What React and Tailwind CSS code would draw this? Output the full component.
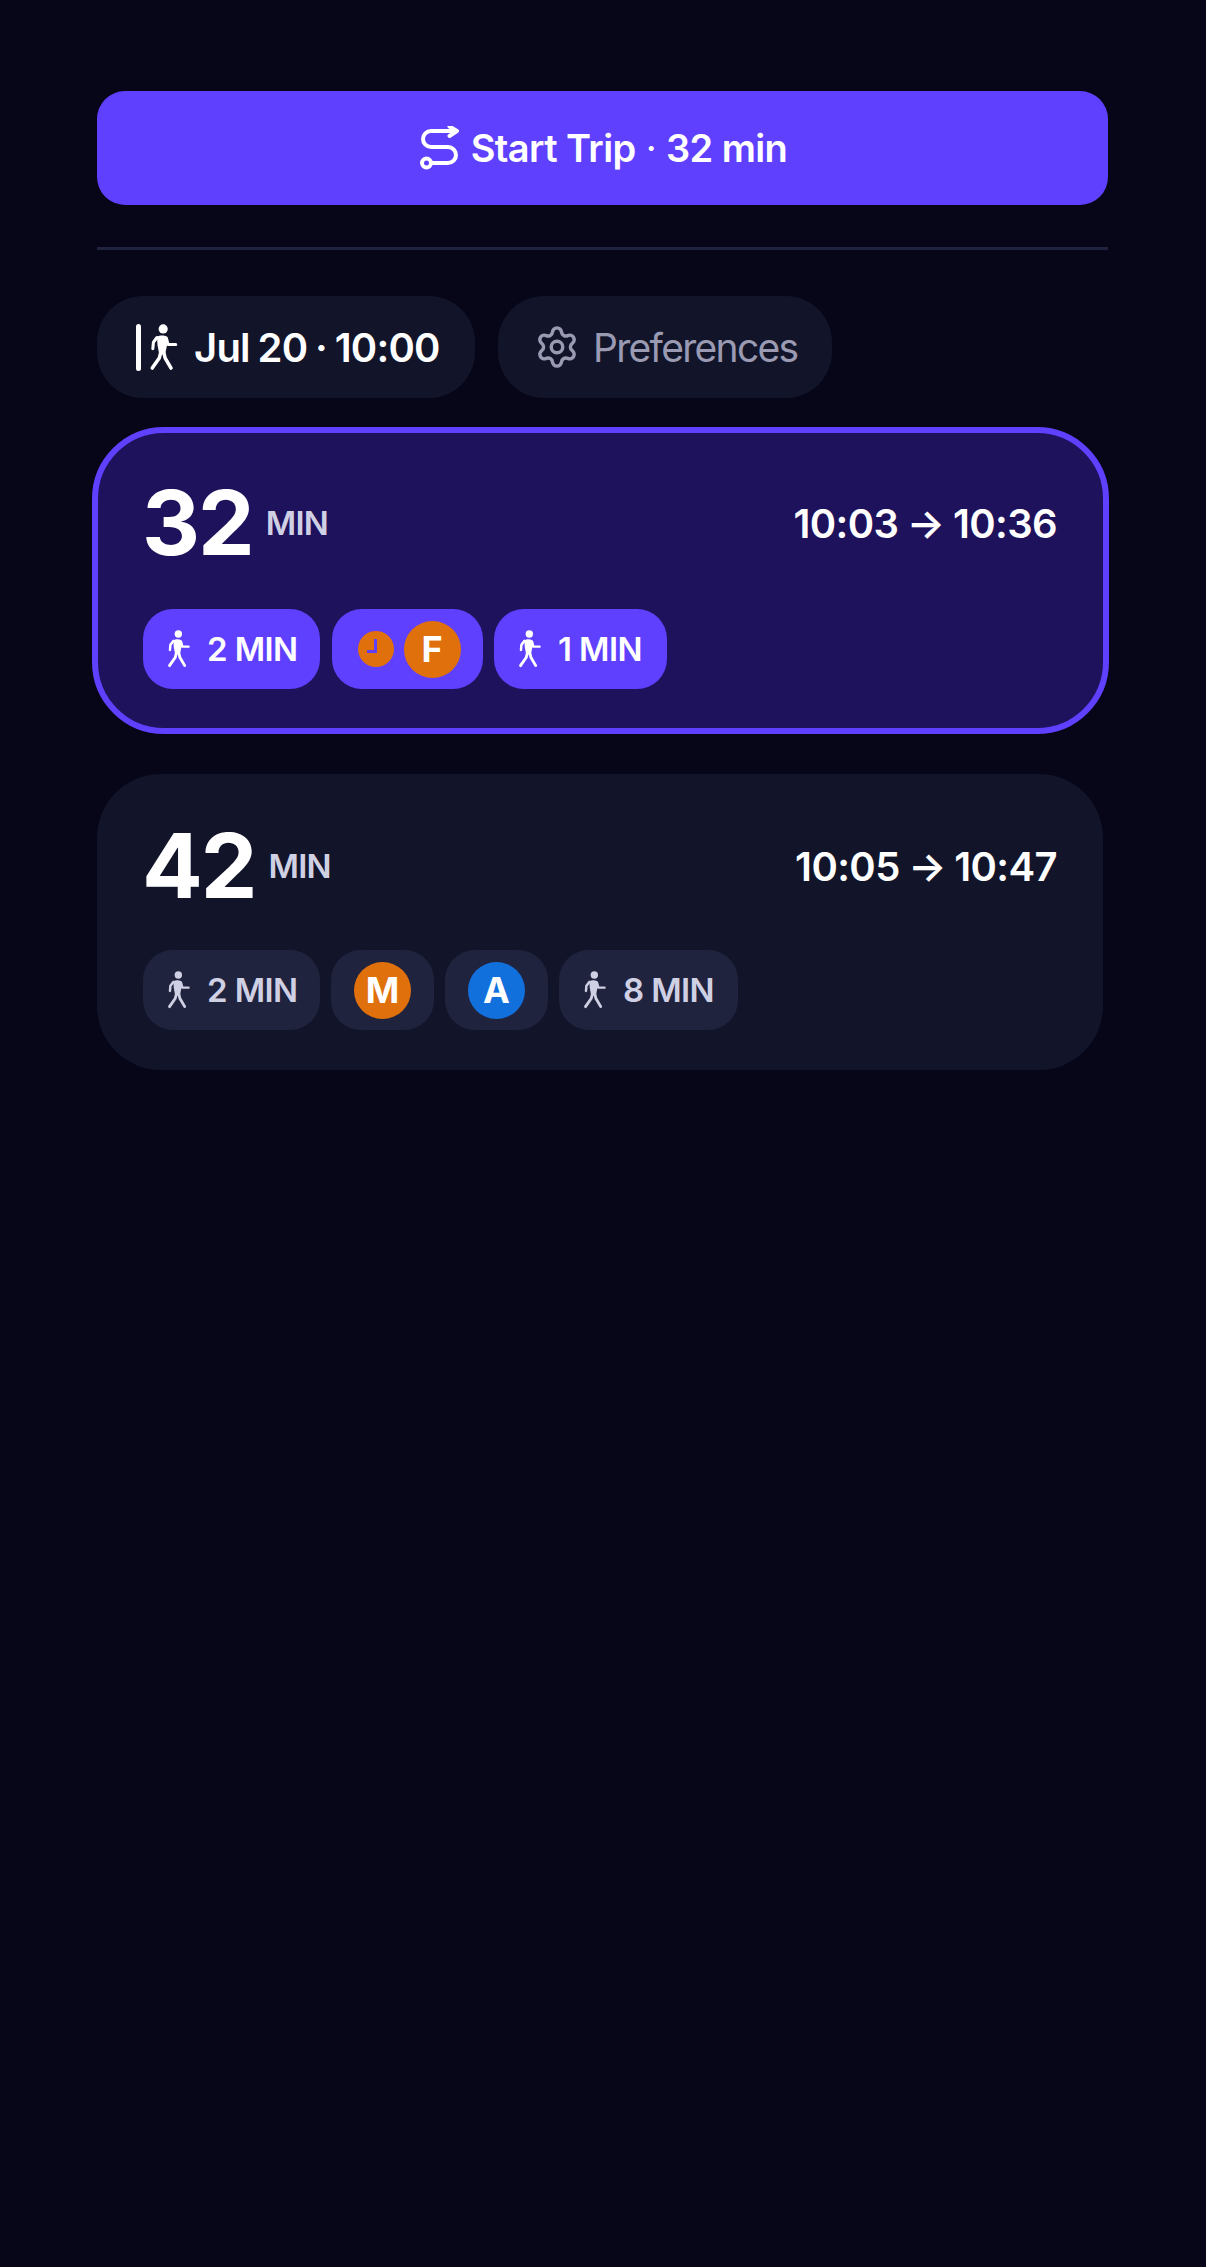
import React from 'react';
import { Settings } from 'lucide-react';

function WalkIcon({ className }) {
  return (
    <svg viewBox="0 0 24 40" className={className} fill="none" stroke="currentColor" strokeLinecap="round" strokeLinejoin="round">
      <circle cx="11.300" cy="4.200" r="3.900" fill="currentColor" stroke="none" />
      <path d="M6 11c2-1.500 6-1.500 8-.5l.5 7.500-1.500 8H8l-1.500-8z" fill="currentColor" stroke="none" />
      <path d="M6 11.500 3 15.500l-.5 5.500" strokeWidth="2.600" />
      <path d="M14 12l1.500 5.500H22" strokeWidth="2.600" />
      <path d="M9 25l-1 4-6 8.500" strokeWidth="3" />
      <path d="M12 25l1 4 5 8.500" strokeWidth="3" />
    </svg>
  );
}

function RouteIcon({ className }) {
  return (
    <svg viewBox="0 0 40 44" className={className} fill="none" stroke="currentColor" strokeWidth="4" strokeLinecap="round" strokeLinejoin="round">
      <circle cx="6.500" cy="37" r="4.500" />
      <path d="M11.500 37H28a8 8 0 0 0 0-16H11a8 8 0 0 1 0-16h25" />
      <path d="M29.500 0.500 37 5l-7.500 5" />
    </svg>
  );
}

function Line({ letter, color }) {
  return (
    <span className={`flex h-[57px] w-[57px] items-center justify-center rounded-full text-[36px] font-bold text-white ${color}`}>
      {letter}
    </span>
  );
}

function WalkPill({ label, active, width }) {
  return (
    <div className={`flex h-[80px] items-center gap-[16px] rounded-[30px] pr-[22px] pl-[24px] text-[33px] font-semibold tracking-[-0.6px] ${width} ${active ? 'bg-[#5f40ff] text-white' : 'bg-[#20233d] text-[#d0d0e4]'}`}>
      <WalkIcon className="h-[38px] w-[24px]" />
      <span className="pt-[2px]">{label}</span>
    </div>
  );
}

function TripHead({ minutes, from, to }) {
  return (
    <div className="flex items-center justify-between">
      <div className="flex items-center gap-[13px]">
        <span className="-ml-[1px] text-[90px] leading-[96px] font-bold tracking-[-2px] text-white">{minutes}</span>
        <span className="pt-[2px] text-[33px] font-semibold tracking-[-0.8px] text-[#d0d0e4]">MIN</span>
      </div>
      <span className="pt-[2px] text-[40px] font-semibold tracking-[-0.6px] [word-spacing:-1px] text-white">
        {from} → {to}
      </span>
    </div>
  );
}

export default function App() {
  return (
    <div className="min-h-[2267px] bg-[#060618] pt-[91px] pr-[98px] pl-[97px] font-['Inter',sans-serif]">
      <button className="flex h-[114px] w-full items-center justify-center gap-[11px] rounded-[28px] bg-[#5f40ff] pl-[2px] text-[38px] font-semibold tracking-[-0.6px] text-white">
        <RouteIcon className="h-[44px] w-[40px]" />
        <span>Start Trip<span className="mx-[10px] font-normal">·</span>32 min</span>
      </button>

      <div className="mt-[42px] h-[3px] bg-[#20233d]" />

      <div className="mt-[46px] flex gap-[23px]">
        <div className="flex h-[102px] w-[378px] items-center gap-[15px] rounded-[46px] bg-[#12152a] pl-[39px] text-[40px] font-semibold tracking-[-0.8px] [word-spacing:-1.500px] text-white">
          <div className="flex items-center gap-[8px]">
            <span className="h-[47px] w-[5px] rounded-full bg-white" />
            <WalkIcon className="h-[47px] w-[30px]" />
          </div>
          <span className="pt-[2px]">Jul 20 · 10:00</span>
        </div>
        <div className="flex h-[102px] w-[334px] items-center gap-[13px] rounded-[46px] bg-[#12152a] pl-[36px] text-[39px] font-normal tracking-[-1.7px] text-[#9a9ab3]">
          <Settings className="h-[46px] w-[46px]" strokeWidth={1.8} />
          <span className="pt-[2px]">Preferences</span>
        </div>
      </div>

      <div className="-ml-[5px] mt-[29px] -mr-[1px] h-[307px] rounded-[72px] border-[6px] border-[#5f40ff] bg-[#1f125c] pt-[42px] pr-[46px] pl-[45px]">
        <TripHead minutes="32" from="10:03" to="10:36" />
        <div className="mt-[38px] flex gap-[11.5px]">
          <WalkPill label="2 MIN" active width="w-[177px]" />
          <div className="flex h-[80px] items-center gap-[10px] rounded-[30px] bg-[#5f40ff] pr-[22px] pl-[26px]">
            <span className="relative h-[36px] w-[36px] rounded-full bg-[#e0700c]">
              <span className="absolute top-[8px] left-[9px] h-[14px] w-[10px] border-r-[3px] border-b-[3px] border-[#5f40ff]" />
            </span>
            <Line letter="F" color="bg-[#e0700c]" />
          </div>
          <WalkPill label="1 MIN" active width="w-[173px]" />
        </div>
      </div>

      <div className="mt-[40px] mr-[5px] h-[296px] rounded-[64px] bg-[#12152a] pt-[44px] pr-[46px] pl-[46px]">
        <TripHead minutes="42" from="10:05" to="10:47" />
        <div className="mt-[36px] flex gap-[11px]">
          <WalkPill label="2 MIN" width="w-[177px]" />
          <div className="flex h-[80px] items-center rounded-[30px] bg-[#20233d] px-[23px]">
            <Line letter="M" color="bg-[#e0700c]" />
          </div>
          <div className="flex h-[80px] items-center rounded-[30px] bg-[#20233d] px-[23px]">
            <Line letter="A" color="bg-[#1270dd]" />
          </div>
          <WalkPill label="8 MIN" width="w-[179px]" />
        </div>
      </div>
    </div>
  );
}
